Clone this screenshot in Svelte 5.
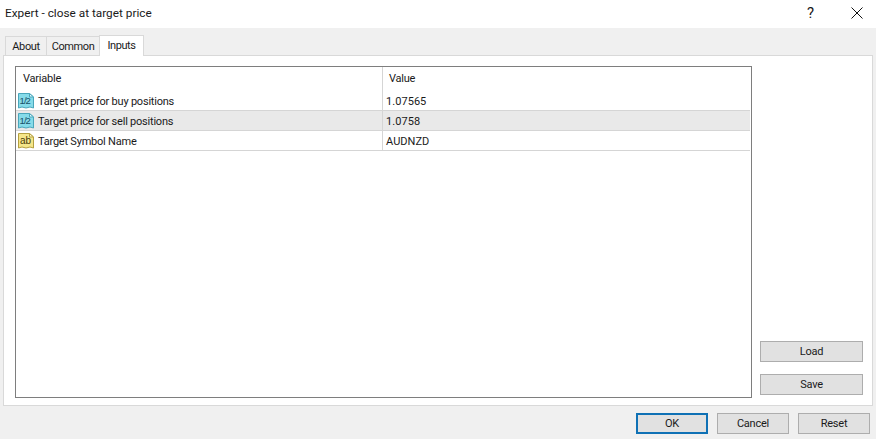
<script lang="ts">
	let rows = [
		{ name: 'Target price for buy positions', value: '1.07565', kind: 'num' },
		{ name: 'Target price for sell positions', value: '1.0758', kind: 'num', selected: true },
		{ name: 'Target Symbol Name', value: 'AUDNZD', kind: 'str' }
	];
	let tabs = ['About', 'Common', 'Inputs'];
</script>

<div class="dialog">
	<header class="titlebar">
		<span class="title">Expert - close at target price</span>
		<span class="help">?</span>
		<svg class="close" width="12" height="12" viewBox="0 0 12 12">
			<path d="M0.5 0.5L11.5 11.5M11.5 0.5L0.5 11.5" stroke="#111" stroke-width="1" fill="none" />
		</svg>
	</header>

	<div class="tabs">
		{#each tabs as tab}
			<div class="tab" class:active={tab === 'Inputs'} class:about={tab === 'About'} class:common={tab === 'Common'}>{tab}</div>
		{/each}
	</div>

	<section class="panel">
		<div class="list">
			<div class="row head">
				<div class="cell var">Variable</div>
				<div class="cell val">Value</div>
			</div>
			{#each rows as row}
				<div class="row" class:selected={row.selected}>
					<div class="cell var">
						<svg class="icon" width="16" height="16" viewBox="0 0 16 16">
							{#if row.kind === 'num'}
								<path d="M0.5 0.5H11.5L15.5 4V15L12 14L8 15L4 14L0.5 15Z" fill="#86dbe9" stroke="#4aa6bb" />
								<path d="M11.5 0.5V4H15.5Z" fill="#e4f7fa" stroke="#4aa6bb" />
								<text x="1.5" y="11" class="glyph num">1/2</text>
							{:else}
								<path d="M0.5 0.5H11.5L15.5 4V15L12 14L8 15L4 14L0.5 15Z" fill="#f5e68a" stroke="#b5a040" />
								<path d="M11.5 0.5V4H15.5Z" fill="#fcf6cf" stroke="#b5a040" />
								<text x="2" y="11" class="glyph str">ab</text>
							{/if}
						</svg>
						<span class="name">{row.name}</span>
					</div>
					<div class="cell val"><span class="name">{row.value}</span></div>
				</div>
			{/each}
		</div>

		<div class="side">
			<button>Load</button>
			<button>Save</button>
		</div>
	</section>

	<footer class="actions">
		<button class="default">OK</button>
		<button>Cancel</button>
		<button>Reset</button>
	</footer>
</div>

<style>
	:global(body) {
		margin: 0;
		background: #f0f0f0;
	}
	.dialog {
		width: 876px;
		height: 439px;
		display: flex;
		flex-direction: column;
		font-family: Roboto, 'Noto Sans', sans-serif;
		font-size: 11px;
		letter-spacing: -0.22px;
		color: #1a1a1a;
		overflow: hidden;
		background: #f0f0f0;
	}
	.titlebar {
		height: 28px;
		flex: none;
		background: #fff;
		display: flex;
		align-items: center;
		padding-left: 5px;
		box-sizing: border-box;
	}
	.title {
		font-size: 11.8px;
		letter-spacing: 0;
		flex: 1;
		position: relative;
		top: -1px;
	}
	.help {
		font-size: 15px;
		width: 8px;
		margin-right: 36px;
		position: relative;
		top: -1px;
	}
	.close {
		margin-right: 13px;
		position: relative;
		top: -1px;
	}
	.tabs {
		height: 27px;
		flex: none;
		display: flex;
		align-items: flex-end;
		padding-left: 5px;
		box-sizing: border-box;
		letter-spacing: -0.4px;
	}
	.tab {
		height: 19px;
		box-sizing: border-box;
		border: 1px solid #d9d9d9;
		border-bottom: none;
		border-right: none;
		background: #f0f0f0;
		text-align: center;
		line-height: 20px;
	}
	.tab.about {
		width: 41px;
	}
	.tab.common {
		width: 53px;
	}
	.tab.active {
		width: 45px;
		height: 21px;
		margin-bottom: -1px;
		background: #fff;
		border-right: 1px solid #d9d9d9;
		line-height: 20px;
		position: relative;
	}
	.panel {
		height: 351px;
		flex: none;
		margin: 0 3px;
		background: #fff;
		border: 1px solid #d9d9d9;
		box-sizing: border-box;
		display: flex;
		padding: 10px 10px 8px 11px;
	}
	.list {
		width: 737px;
		height: 332px;
		box-sizing: border-box;
		border: 1px solid #7e7e7e;
		flex: none;
	}
	.row {
		display: flex;
		height: 20px;
		box-sizing: border-box;
		border-bottom: 1px solid #d5d5d5;
		align-items: center;
		width: 734px;
	}
	.row.head {
		height: 24px;
		border-bottom: none;
		padding-bottom: 2px;
	}
	.row.selected {
		background: #e9e9e9;
	}
	.cell {
		height: 100%;
		display: flex;
		align-items: center;
		box-sizing: border-box;
	}
	.name {
		padding-top: 1px;
	}
	.var {
		width: 367px;
		padding-left: 2px;
		border-right: 1px solid #d5d5d5;
	}
	.val {
		flex: 1;
		padding-left: 3px;
		letter-spacing: 0.05px;
	}
	.head .var {
		padding-left: 7px;
		height: 24px;
		margin-bottom: -2px;
		padding-bottom: 2px;
	}
	.head .val {
		padding-left: 6px;
		letter-spacing: -0.22px;
	}
	.icon {
		flex: none;
		margin-right: 4px;
	}
	.glyph {
		font-family: 'Liberation Sans', sans-serif;
		fill: #16506a;
	}
	.glyph.num {
		font-size: 9.5px;
		letter-spacing: -0.9px;
	}
	.glyph.str {
		font-size: 10px;
		letter-spacing: 0;
		fill: #4a3c08;
	}
	.side {
		flex: 1;
		display: flex;
		flex-direction: column;
		justify-content: flex-end;
		align-items: flex-start;
		gap: 12px;
		padding-left: 8px;
		padding-bottom: 2px;
	}
	button {
		font: inherit;
		letter-spacing: inherit;
		color: #1a1a1a;
		width: 103px;
		height: 21px;
		padding: 0;
		background: #e1e1e1;
		border: 1px solid #adadad;
		box-sizing: border-box;
	}
	.actions {
		flex: 1;
		display: flex;
		justify-content: flex-end;
		gap: 9px;
		padding: 7px 6px 0 0;
		box-sizing: border-box;
	}
	.actions button {
		width: 72px;
	}
	.actions .default {
		border: 2px solid #0f71b5;
	}
</style>
